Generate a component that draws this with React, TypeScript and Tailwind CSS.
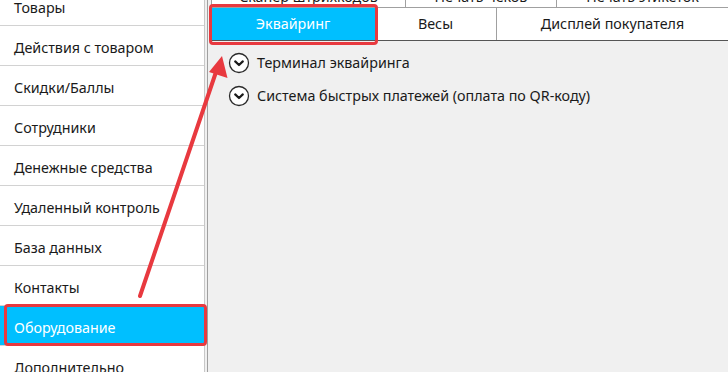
import React from "react";

const items = [
  "Товары",
  "Действия с товаром",
  "Скидки/Баллы",
  "Сотрудники",
  "Денежные средства",
  "Удаленный контроль",
  "База данных",
  "Контакты",
  "Оборудование",
  "Дополнительно",
];

function CircleChevron() {
  return (
    <svg width="22" height="22" viewBox="0 0 22 22" className="shrink-0">
      <circle cx="11" cy="11" r="9.5" fill="#fff" stroke="#2a2a2a" strokeWidth="1.3" />
      <path d="M7.2 9.4 L11 13 L14.8 9.4" fill="none" stroke="#1a1a1a" strokeWidth="2.2" strokeLinecap="round" strokeLinejoin="round" />
    </svg>
  );
}

export default function App() {
  return (
    <div
      className="relative flex h-[372px] w-[728px] overflow-hidden bg-[#f0f0f0] text-[#1a1a1a]"
      style={{ fontFamily: '"Noto Sans", "Open Sans", sans-serif' }}
    >
      {/* Sidebar */}
      <div className="flex w-[205px] shrink-0 flex-col border-r border-[#c8c8c8] bg-white">
        <div className="-mt-[14px] flex flex-col">
          {items.map((t) => {
            const sel = t === "Оборудование";
            return (
              <div
                key={t}
                className={
                  "flex h-[40px] shrink-0 items-center border-b border-[#d2d2d2] pl-[14px] pt-[4px] text-[14.3px] " +
                  (sel ? "bg-[#00bfff] text-white" : "")
                }
              >
                {t}
              </div>
            );
          })}
        </div>
      </div>

      {/* gap + content */}
      <div className="ml-[2px] flex flex-1 flex-col border-l border-[#a0a0a0]">
        <div className="ml-[3px] flex flex-col">
          {/* row 1 (cut off) */}
          <div className="-mt-[12px] flex h-[20px] border-b border-[#a0a0a0] bg-white text-[14.3px] leading-[18px]">
            <div className="flex w-[195px] shrink-0 justify-center border-l border-r border-[#a0a0a0]">Сканер штрихкодов</div>
            <div className="flex w-[151px] shrink-0 justify-center border-r border-[#a0a0a0]">Печать чеков</div>
            <div className="flex flex-1 justify-center">Печать этикеток</div>
          </div>
          {/* row 2 */}
          <div className="flex h-[33px] border-b border-[#555] bg-white text-[14.3px]">
            <div className="flex w-[164px] shrink-0 items-center justify-center bg-[#00bfff] text-white">Эквайринг</div>
            <div className="flex w-[122px] shrink-0 items-center justify-center border-r border-[#a0a0a0]">Весы</div>
            <div className="flex flex-1 items-center justify-center">Дисплей покупателя</div>
          </div>
        </div>
        <div className="flex flex-col gap-[11px] pl-[20px] pt-[11px] text-[14.3px]">
          <div className="flex items-center gap-[7px]">
            <CircleChevron />
            <span>Терминал эквайринга</span>
          </div>
          <div className="flex items-center gap-[7px]">
            <CircleChevron />
            <span>Система быстрых платежей (оплата по QR-коду)</span>
          </div>
        </div>
      </div>

      {/* highlight boxes */}
      <div className="pointer-events-none absolute left-[209px] top-[4px] h-[41px] w-[169px] rounded-[4px] border-[3px] border-[#e8393f]" />
      <div className="pointer-events-none absolute left-[4px] top-[304px] h-[42px] w-[203px] rounded-[4px] border-[3px] border-[#e8393f]" />

      {/* arrow */}
      <svg className="pointer-events-none absolute left-0 top-0" width="728" height="372">
        <line x1="140" y1="296" x2="216" y2="72" stroke="#e8393f" strokeWidth="4" strokeLinecap="round" />
        <polygon points="222,56 227.5,78 209,72" fill="#e8393f" />
      </svg>
    </div>
  );
}
